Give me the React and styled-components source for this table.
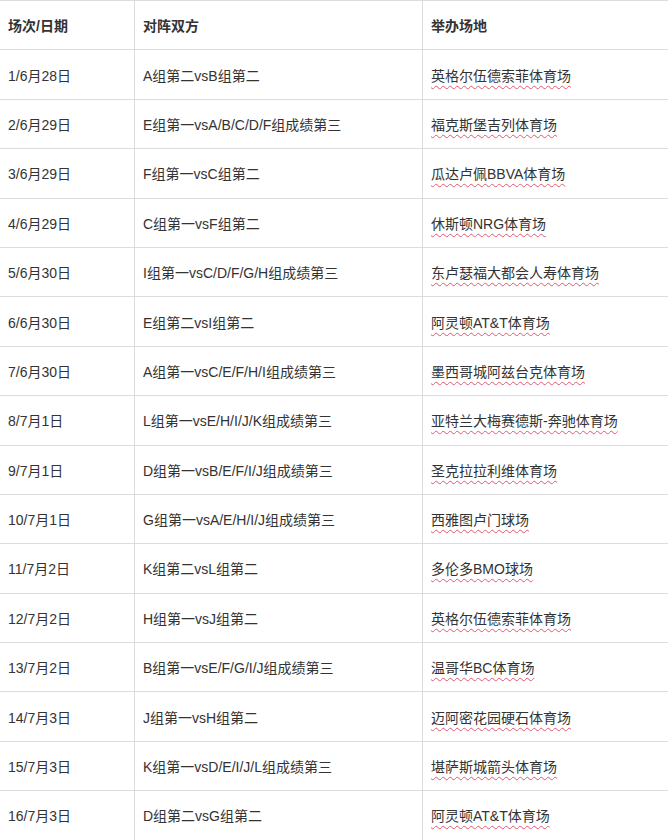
import React from 'react';
import styled, { createGlobalStyle } from 'styled-components';

const GlobalStyle = createGlobalStyle`
  html, body {
    margin: 0;
    padding: 0;
    background: #fff;
  }
  body {
    font-family: "Liberation Sans", "Noto Sans CJK SC", sans-serif;
    color: #333;
  }
`;

const matches = [
  ['1/6月28日', 'A组第二vsB组第二', '英格尔伍德索菲体育场'],
  ['2/6月29日', 'E组第一vsA/B/C/D/F组成绩第三', '福克斯堡吉列体育场'],
  ['3/6月29日', 'F组第一vsC组第二', '瓜达卢佩BBVA体育场'],
  ['4/6月29日', 'C组第一vsF组第二', '休斯顿NRG体育场'],
  ['5/6月30日', 'I组第一vsC/D/F/G/H组成绩第三', '东卢瑟福大都会人寿体育场'],
  ['6/6月30日', 'E组第二vsI组第二', '阿灵顿AT&T体育场'],
  ['7/6月30日', 'A组第一vsC/E/F/H/I组成绩第三', '墨西哥城阿兹台克体育场'],
  ['8/7月1日', 'L组第一vsE/H/I/J/K组成绩第三', '亚特兰大梅赛德斯-奔驰体育场'],
  ['9/7月1日', 'D组第一vsB/E/F/I/J组成绩第三', '圣克拉拉利维体育场'],
  ['10/7月1日', 'G组第一vsA/E/H/I/J组成绩第三', '西雅图卢门球场'],
  ['11/7月2日', 'K组第二vsL组第二', '多伦多BMO球场'],
  ['12/7月2日', 'H组第一vsJ组第二', '英格尔伍德索菲体育场'],
  ['13/7月2日', 'B组第一vsE/F/G/I/J组成绩第三', '温哥华BC体育场'],
  ['14/7月3日', 'J组第一vsH组第二', '迈阿密花园硬石体育场'],
  ['15/7月3日', 'K组第一vsD/E/I/J/L组成绩第三', '堪萨斯城箭头体育场'],
  ['16/7月3日', 'D组第二vsG组第二', '阿灵顿AT&T体育场'],
];

const Table = styled.div`
  display: flex;
  flex-direction: column;
  width: 100%;
  border-top: 1px solid #dcdcdc;
`;

const Row = styled.div`
  display: grid;
  grid-template-columns: 135px 288px 1fr;
  height: 49.4px;
  box-sizing: border-box;
  border-bottom: 1px solid #dcdcdc;
  font-size: 14px;
  font-weight: ${p => (p.$head ? 700 : 400)};
`;

const Cell = styled.div`
  display: flex;
  align-items: center;
  padding: 0 8px;
  box-sizing: border-box;
  white-space: nowrap;
  border-right: ${p => (p.$last ? 'none' : '1px solid #dcdcdc')};
`;

const Venue = styled.span`
  text-decoration: underline wavy #e05873;
  text-decoration-thickness: 1px;
  text-underline-offset: 4px;
`;

export default function App() {
  return (
    <>
      <GlobalStyle />
      <Table>
        <Row $head>
          <Cell>场次/日期</Cell>
          <Cell>对阵双方</Cell>
          <Cell $last>举办场地</Cell>
        </Row>
        {matches.map(([date, teams, venue], i) => (
          <Row key={i}>
            <Cell>{date}</Cell>
            <Cell>{teams}</Cell>
            <Cell $last>
              <Venue>{venue}</Venue>
            </Cell>
          </Row>
        ))}
      </Table>
    </>
  );
}
